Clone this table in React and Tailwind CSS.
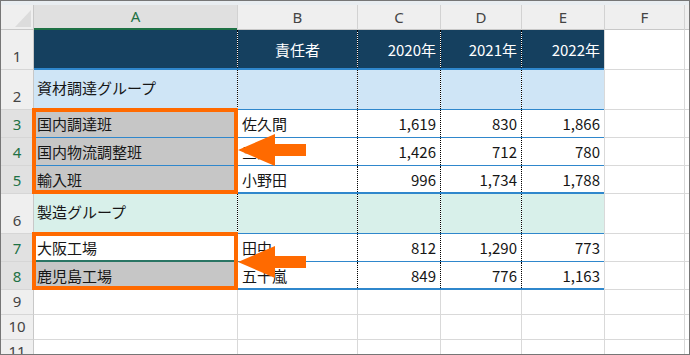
import React from "react";

const JP = { fontFamily: '"Noto Sans CJK JP", "Noto Sans", sans-serif' };

const widths = ["w-[203px]", "w-[119px]", "w-[82px]", "w-[80px]", "w-[82px]"];

const rows = [
  { n: "1", h: "h-[40px]", bg: "bg-[#15405f]", bb: "border-b-2 border-b-[#2f87cc]", head: true, pad: "", cells: ["", "責任者", "2020年", "2021年", "2022年"] },
  { n: "2", h: "h-[40px]", bg: "bg-[#cfe5f6]", bb: "border-b border-b-[#2f87cc]", pad: "pb-[4px]", cells: ["資材調達グループ", "", "", "", ""] },
  { n: "3", h: "h-[28px]", bg: "bg-white", bb: "border-b border-b-[#2f87cc]", pad: "", sel: true, aBg: "bg-[#c6c6c6]", cells: ["国内調達班", "佐久間", "1,619", "830", "1,866"] },
  { n: "4", h: "h-[28px]", bg: "bg-white", bb: "border-b border-b-[#2f87cc]", pad: "", sel: true, aBg: "bg-[#c6c6c6]", cells: ["国内物流調整班", "三浦", "1,426", "712", "780"] },
  { n: "5", h: "h-[28px]", bg: "bg-white", bb: "border-b-2 border-b-[#2f87cc]", pad: "", sel: true, aBg: "bg-[#c6c6c6]", cells: ["輸入班", "小野田", "996", "1,734", "1,788"] },
  { n: "6", h: "h-[40px]", bg: "bg-[#d8f0ea]", bb: "border-b border-b-[#2f87cc]", pad: "pb-[4px]", cells: ["製造グループ", "", "", "", ""] },
  { n: "7", h: "h-[28px]", bg: "bg-white", bb: "border-b border-b-[#2f87cc]", pad: "", sel: true, aBg: "bg-white", aBb: "border-b-2 border-b-[#2a7564]", cells: ["大阪工場", "田中", "812", "1,290", "773"] },
  { n: "8", h: "h-[28px]", bg: "bg-white", bb: "border-b-2 border-b-[#2f87cc]", pad: "", sel: true, aBg: "bg-[#c6c6c6]", cells: ["鹿児島工場", "五十嵐", "849", "776", "1,163"] },
];

const plainRows = ["9", "10", "11"];

function RowHeader({ n, sel, h }) {
  return (
    <div
      className={`${h} w-[33px] flex-none flex items-end justify-center pb-[5px] border-r border-r-[#c8c8c8] border-b border-b-[#d6d6d6] text-[15px] leading-none ${
        sel ? "bg-[#e1e1e1] text-[#1e7145]" : "bg-[#efefef] text-[#444]"
      }`}
      style={{ fontFamily: '"Noto Sans", sans-serif' }}
    >
      {n}
    </div>
  );
}

function DotDivider({ bb }) {
  return (
    <div className={`w-px flex-none self-stretch bg-white ${bb}`}>
      <div className="h-full w-0 border-l border-dotted border-black" />
    </div>
  );
}

function GrayDivider() {
  return <div className="w-px flex-none self-stretch bg-[#d9d9d9]" />;
}

function TableRow({ r }) {
  return (
    <div className={`flex ${r.h}`}>
      <RowHeader n={r.n} sel={r.sel} h={r.h} />
      {r.cells.map((c, i) => {
        const isA = i === 0;
        const bg = isA && r.aBg ? r.aBg : r.bg;
        const bb = isA && r.aBb ? r.aBb : r.bb;
        let align = "justify-end pr-[4px]";
        if (i === 0) align = "justify-start pl-[3px]";
        if (i === 1) align = r.head ? "justify-center" : "justify-start pl-[4px]";
        return (
          <React.Fragment key={i}>
            <div
              className={`${widths[i]} flex-none flex items-center ${align} ${r.pad} ${bg} ${bb} text-[15px] leading-none whitespace-nowrap ${
                r.head ? "text-white" : "text-[#161616]"
              }`}
              style={JP}
            >
              {c}
            </div>
            {i < 4 ? <DotDivider bb={r.bb} /> : <GrayDivider />}
          </React.Fragment>
        );
      })}
      <div className="w-[79px] flex-none border-b border-b-[#d9d9d9] bg-white" />
      <GrayDivider />
      <div className="flex-1 border-b border-b-[#d9d9d9] bg-white" />
    </div>
  );
}

function PlainRow({ n }) {
  const ws = ["w-[203px]", "w-[119px]", "w-[82px]", "w-[80px]", "w-[82px]", "w-[79px]"];
  return (
    <div className="flex h-[25px]">
      <RowHeader n={n} h="h-[25px]" />
      {ws.map((w, i) => (
        <React.Fragment key={i}>
          <div className={`${w} flex-none border-b border-b-[#d9d9d9] bg-white`} />
          <GrayDivider />
        </React.Fragment>
      ))}
      <div className="flex-1 border-b border-b-[#d9d9d9] bg-white" />
    </div>
  );
}

function ColHeader() {
  const letters = [
    { l: "A", w: "w-[203px]", sel: true },
    { l: "B", w: "w-[119px]" },
    { l: "C", w: "w-[82px]" },
    { l: "D", w: "w-[80px]" },
    { l: "E", w: "w-[82px]" },
    { l: "F", w: "w-[79px]" },
  ];
  return (
    <div className="flex h-[25px]" style={{ fontFamily: '"Noto Sans", sans-serif' }}>
      <div className="relative w-[33px] flex-none bg-[#efefef] border-r border-r-[#c8c8c8] border-b border-b-[#c8c8c8]">
        <svg className="absolute left-0 top-0" width="33" height="25" viewBox="0 0 33 25">
          <polygon points="14,22 30,5 30,22" fill="#dcdcdc" />
        </svg>
      </div>
      {letters.map((c) => (
        <React.Fragment key={c.l}>
          <div
            className={`${c.w} flex-none flex items-center justify-center text-[15px] leading-none ${
              c.sel
                ? "bg-[#e0e0e0] text-[#1e7145] border-b-2 border-b-[#1e7145]"
                : "bg-[#efefef] text-[#444] border-b border-b-[#c8c8c8]"
            }`}
          >
            {c.l}
          </div>
          <div className="w-px flex-none self-stretch bg-[#d2d2d2]" />
        </React.Fragment>
      ))}
      <div className="flex-1 bg-[#efefef] border-b border-b-[#c8c8c8]" />
    </div>
  );
}

function Arrow({ top }) {
  return (
    <svg
      className="absolute left-[237px]"
      style={{ top }}
      width="68"
      height="32"
      viewBox="0 0 68 32"
    >
      <polygon points="0,16 37,0 37,10 68,10 68,22 37,22 37,32" fill="#ff6a00" />
    </svg>
  );
}

export default function App() {
  return (
    <div className="relative w-[690px] h-[355px] overflow-hidden border border-[#767676] bg-white">
      <div className="h-[4px] bg-[#e8edf1]" />
      <ColHeader />
      {rows.map((r) => (
        <TableRow key={r.n} r={r} />
      ))}
      {plainRows.map((n) => (
        <PlainRow key={n} n={n} />
      ))}

      <div className="absolute left-[31px] top-[107px] w-[206px] h-[86px] border-4 border-[#ff6a00]" />
      <div className="absolute left-[31px] top-[231px] w-[206px] h-[58px] border-4 border-[#ff6a00]" />
      <Arrow top={133} />
      <Arrow top={245} />
    </div>
  );
}
